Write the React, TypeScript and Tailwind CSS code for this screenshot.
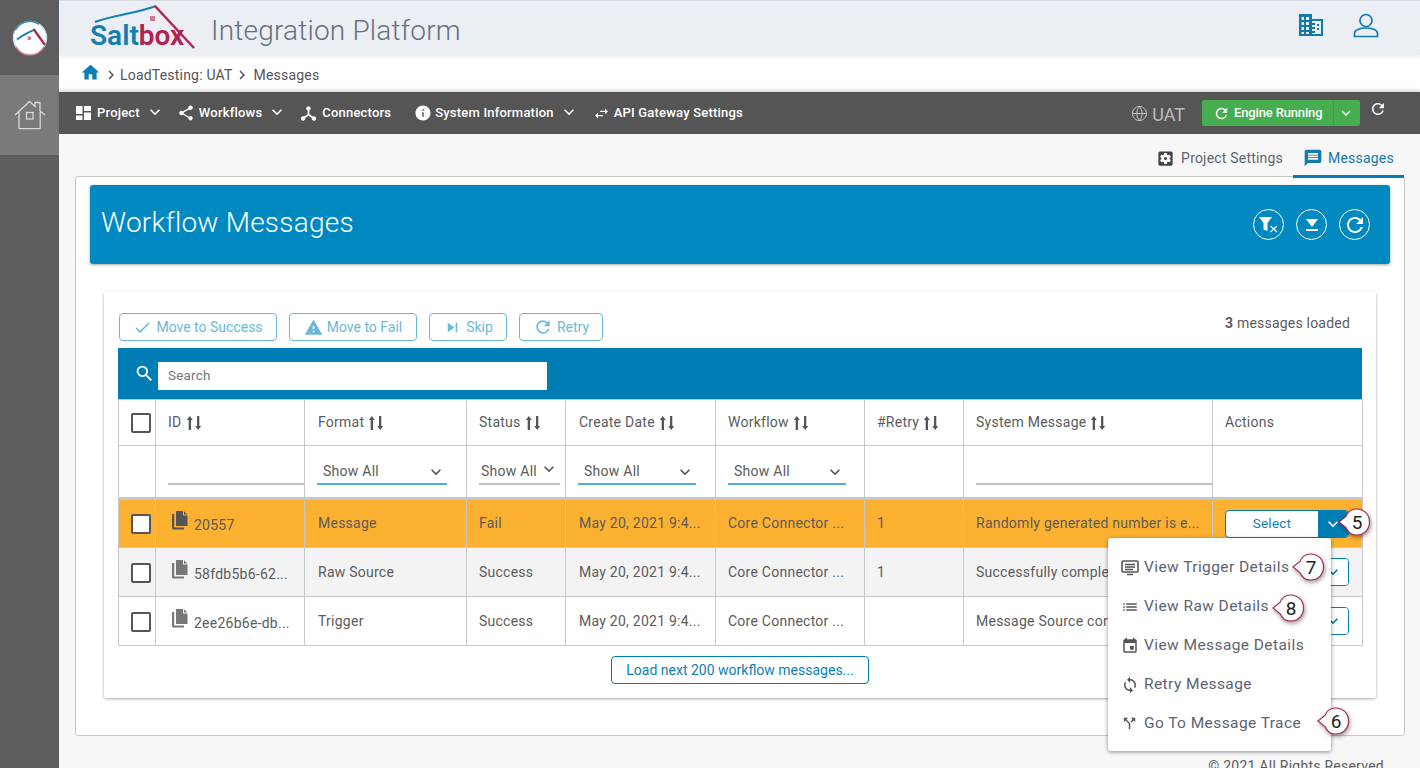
import React from "react";
import {
  MdHome, MdShare, MdInfo, MdSwapHoriz, MdRefresh, MdKeyboardArrowDown, MdSettingsApplications, MdMessage,
  MdCheck, MdWarning, MdSkipNext, MdSearch, MdList, MdEvent, MdSync, MdCallSplit, MdChevronRight, MdExpandMore,
} from "react-icons/md";
import { Globe } from "lucide-react";

const Sort = () => (
  <svg width="16" height="16" viewBox="0 0 16 16" className="shrink-0" fill="#555">
    <path d="M3.800 1 0.800 5H2.700V15H5V5H6.800Z" />
    <path d="M12.200 15 15.200 11H13.300V1H11V11H9.200Z" />
  </svg>
);

const FileIcon = ({ dark }: { dark?: boolean }) => (
  <svg width="16" height="19" viewBox="0 0 16 19" fill={dark ? "#555" : "#777"} className="shrink-0">
    <path d="M4 0H11V4.500H15.500V15H4Z" />
    <path d="M12 0.200 15.300 3.500H12Z" />
    <path d="M0 3H2.200V16.400H12V18.500H1.500C.6 18.500 0 17.900 0 17Z" />
  </svg>
);

const Check = () => <span className="block w-[20px] h-[20px] rounded-[2px] border-2 border-[#555] bg-white shrink-0" />;

const Callout = ({ n, cls }: { n: string; cls: string }) => (
  <div className={`absolute w-[33px] h-[28px] ${cls}`}>
    <svg width="33" height="28" viewBox="0 0 33 28" className="absolute inset-0 drop-shadow-[1px_2px_2px_rgba(0,0,0,0.4)]">
      <path d="M1 14 8 8.500C10 3.500 13.500 1 18.500 1 26 1 31.500 6.500 31.500 14 31.500 21.500 26 27 18.500 27 13.500 27 10 24.500 8 19.500Z" fill="#fff" stroke="#a62c56" strokeWidth="1.200" />
    </svg>
    <span className="absolute left-[5px] right-0 top-[1px] h-full flex items-center justify-center text-[19px] text-[#222] font-[family-name:'Liberation_Sans',sans-serif]">{n}</span>
  </div>
);

const NavItem = ({ icon, label, chev, cls }: { icon: React.ReactNode; label: string; chev?: boolean; cls?: string }) => (
  <div className={`flex items-center text-white text-[13px] font-medium tracking-[0.2px] ${cls ?? ""}`}>
    {icon}
    <span>{label}</span>
    {chev && <MdKeyboardArrowDown size={20} className="ml-[5px] -mt-[1px]" />}
  </div>
);

const ToolBtn = ({ icon, label, w }: { icon: React.ReactNode; label: string; w: string }) => (
  <div className={`h-[28px] ${w} flex items-center justify-center gap-[4px] rounded-[4px] border border-[#6bb9d6] text-[#6bb9d6] text-[14px] bg-white`}>
    {icon}
    <span>{label}</span>
  </div>
);

const Head = ({ label, sort = true, shift }: { label: string; sort?: boolean; shift?: boolean }) => (
  <th className={`border border-[#c8c8c8] font-normal text-left ${shift ? "pl-[13px] pr-[11px]" : "px-[12px]"}`}>
    <div className="flex items-center gap-[4px]"><span>{label}</span>{sort && <Sort />}</div>
  </th>
);

const ShowAll = ({ w, pl = "pl-[6px]", up, sel = true }: { w: string; pl?: string; up?: boolean; sel?: boolean }) => (
  <td className="border border-[#c8c8c8] border-b-[3px] border-b-[#c8c8c8] align-top pt-[14px]">
    <div className={`${w} ml-[12px] h-[25px] flex items-center justify-between ${pl} border-b-2 whitespace-nowrap ${sel ? "border-[#4eb0d8]" : "border-[#c0c0c0]"}`}>
      <span>Show All</span>
      <MdExpandMore size={20} className={`text-[#555] shrink-0 ${up ? "mb-[6px] mr-[1px]" : "mr-[1px]"}`} />
    </div>
  </td>
);

const SelectBtn = ({ open }: { open?: boolean }) => (
  <div className="flex w-[124px] h-[28px] rounded-[4px] border border-[#007db4] bg-white overflow-hidden">
    <span className="flex-1 flex items-center justify-center text-[#0c7fb3] text-[13.500px]">Select</span>
    <span className={`w-[30px] flex items-center justify-center ${open ? "bg-[#007db4] text-white" : "bg-white text-[#007db4]"}`}>
      <MdKeyboardArrowDown size={20} />
    </span>
  </div>
);

const rows = [
  { id: "20557", fmt: "Message", st: "Fail", wf: "Core Connector ...", ret: "1", msg: "Randomly generated number is e...", bg: "bg-[#fdb130]", dark: true },
  { id: "58fdb5b6-62...", fmt: "Raw Source", st: "Success", wf: "Core Connector ...", ret: "1", msg: "Successfully comple", bg: "bg-[#f3f3f3]" },
  { id: "2ee26b6e-db...", fmt: "Trigger", st: "Success", wf: "Core Connector ...", ret: "", msg: "Message Source cor", bg: "bg-white" },
];

const MenuItem = ({ icon, label }: { icon: React.ReactNode; label: string }) => (
  <div className="h-[39px] flex items-center pl-[13px] text-[15.500px] tracking-[0.42px] text-[#5c6470]">
    <span className="w-[23px] flex items-center text-[#555]">{icon}</span>
    <span>{label}</span>
  </div>
);

const Circle = ({ children }: { children: React.ReactNode }) => (
  <div className="w-[31px] h-[31px] rounded-full border border-white flex items-center justify-center text-white">{children}</div>
);

export default function App() {
  return (
    <div className="relative flex h-[768px] w-full overflow-hidden bg-[#f7f7f7] font-[family-name:Roboto,sans-serif] text-[14px] text-[#5b5b5b]">
      {/* sidebar */}
      <aside className="w-[59px] shrink-0 bg-[#5d5d5d] flex flex-col">
        <div className="h-[75px] flex items-center justify-center">
          <svg width="36" height="36" viewBox="0 0 36 36">
            <circle cx="18" cy="18" r="16.500" fill="#fff" stroke="#c7e3ee" strokeWidth="1.500" />
            <path d="M4 27A16 16 0 0 0 32 27" fill="none" stroke="#d9577f" strokeWidth="1.300" />
            <path d="M3.500 10A16.500 16.500 0 0 1 27 4" fill="none" stroke="#2f8db3" strokeWidth="1.500" />
            <path d="M5 19.500C10 15 16 13 22.500 9.500" fill="none" stroke="#1582ae" strokeWidth="1.800" />
            <path d="M21.500 9 33 25" fill="none" stroke="#b21f4c" strokeWidth="2.200" />
            <rect x="15.500" y="16.500" width="3.500" height="3.500" fill="#d67b97" />
          </svg>
        </div>
        <div className="h-[80px] bg-[#7a7a7a] flex items-center justify-center">
          <svg width="32" height="30" viewBox="0 0 32 30" fill="none" stroke="#d8d8d8" strokeWidth="1.300">
            <path d="M1 15 15.500 1.500 21 6.500V2.500H26V11L31 15" />
            <path d="M5 12V27.500C5 28.300 5.500 28.700 6.300 28.700H25C25.700 28.700 26.200 28.300 26.200 27.500V12" />
            <rect x="12.500" y="12.500" width="6.500" height="6.500" />
          </svg>
        </div>
      </aside>

      <main className="flex-1 min-w-0 flex flex-col">
        {/* header */}
        <header className="relative h-[55px] shrink-0 bg-[#ebeef3] border-t border-[#d6dbe1] flex items-center shadow-[0_2px_4px_rgba(0,0,0,0.08)]">
          <div className="relative ml-[31px] w-[104px] h-[50px]">
            <svg width="106" height="48" viewBox="0 0 106 48" className="absolute left-0 top-0" fill="none">
              <path d="M5 19C24 12 44 11 66 3" stroke="#1582ae" strokeWidth="2" />
              <path d="M65 3 104 45" stroke="#b5234f" strokeWidth="2.500" />
              <rect x="60" y="13" width="5" height="5" fill="#cf7b95" />
            </svg>
            <span className="absolute left-0 top-[15px] text-[28px] leading-[36px] font-semibold font-[family-name:'Open_Sans',sans-serif] whitespace-nowrap">
              <span className="text-[#137fb0]">Salt</span><span className="text-[#b3214e]">box</span>
            </span>
          </div>
          <span className="ml-[17px] mt-[5px] text-[28px] font-light tracking-[0.2px] text-[#687080]">Integration Platform</span>
          <div className="ml-auto mr-[41px] -mt-[6px] flex items-center gap-[30px] text-[#1479ad]">
            <svg width="24" height="22" viewBox="0 0 24 22" fill="currentColor">
              <path fillRule="evenodd" d="M0 0H13V5H24V22H0ZM2.500 3V6H5V3ZM7 3V6H10V3ZM2.500 8V11H5V8ZM7 8V11H10V8ZM2.500 13V16H5V13ZM7 13V16H10V13ZM2.500 18V20H5V18ZM7 18V20H10V18ZM13 7V9H16V11H13V13H16V15H13V17H16V19H13V20H22V7ZM18 10H20V12H18ZM18 14H20V16H18Z" />
            </svg>
            <svg width="26" height="25" viewBox="0 0 26 25" fill="none" stroke="currentColor" strokeWidth="1.700">
              <circle cx="13" cy="7.500" r="6" />
              <path d="M1.500 20.500C1.500 16.500 8 15 13 15S24.500 16.500 24.500 20.500V23.500H1.500Z" />
            </svg>
          </div>
        </header>

        {/* breadcrumb */}
        <div className="h-[37px] shrink-0 bg-white flex items-center pl-[21px] text-[14px] tracking-[0.2px] text-[#555]">
          <MdHome size={21} className="text-[#0b7fb5] -mt-[3px]" />
          <MdChevronRight size={18} className="ml-[1px] mt-[3px]" />
          <span className="mt-[3px]">LoadTesting: UAT</span>
          <MdChevronRight size={18} className="mt-[3px]" />
          <span className="ml-[3px] mt-[3px]">Messages</span>
        </div>

        {/* nav */}
        <nav className="h-[42px] shrink-0 bg-[#555] flex items-center pl-[17px] shadow-[0_-2px_3px_rgba(0,0,0,0.15)]">
          <NavItem cls="-mt-[1px]" chev label="Project" icon={
            <svg width="15" height="14" viewBox="0 0 15 14" fill="#fff" className="mr-[6px]"><rect width="6.500" height="8" /><rect x="8" width="7" height="5" /><rect y="9.500" width="6.500" height="4.500" /><rect x="8" y="6.500" width="7" height="7.500" /></svg>
          } />
          <NavItem cls="ml-[12px] -mt-[1px]" chev label="Workflows" icon={<MdShare size={18} className="mr-[4px]" />} />
          <NavItem cls="ml-[14px]" label="Connectors" icon={
            <svg width="15" height="15" viewBox="0 0 15 15" fill="#fff" stroke="#fff" className="mr-[6px]"><circle cx="7.500" cy="2.500" r="1.800" /><circle cx="2" cy="12.500" r="1.800" /><circle cx="13" cy="12.500" r="1.800" /><path d="M7.500 3V8.500L2 12.500M7.500 8.500 13 12.500" strokeWidth="1.700" fill="none" /></svg>
          } />
          <NavItem cls="ml-[23px] -mt-[1px]" chev label="System Information" icon={<MdInfo size={18} className="mr-[3px]" />} />
          <NavItem cls="ml-[14px]" label="API Gateway Settings" icon={<MdSwapHoriz size={17} className="mr-[4px]" />} />
          <div className="ml-auto flex items-center">
            <Globe size={17} strokeWidth={1.400} className="text-[#c4c4c4] mt-[1px]" />
            <span className="ml-[4px] mt-[2px] text-[18px] text-[#bbb]">UAT</span>
            <div className="ml-[17px] w-[158px] h-[26px] rounded-[2px] bg-[#46ae4f] flex text-white text-[13px] font-medium">
              <div className="flex-1 flex items-center pl-[11px] border-r border-[#3f9c47]">
                <MdRefresh size={17} className="mr-[4px]" />
                <span className="tracking-[-0.15px]">Engine Running</span>
              </div>
              <div className="w-[26px] flex items-center justify-center pr-[2px]"><MdKeyboardArrowDown size={18} /></div>
            </div>
            <MdRefresh size={18} className="text-white ml-[9px] mr-[33px] -mt-[8px]" />
          </div>
        </nav>

        {/* content tabs */}
        <div className="h-[42px] shrink-0 flex items-end justify-end pr-[16px] relative z-10">
          <div className="flex items-center gap-[6px] h-[44px] -mb-[2px] pt-[4px] pr-[10px] text-[14px] tracking-[0.2px] text-[#5c6470]">
            <MdSettingsApplications size={19} className="text-[#444]" />
            <span>Project Settings</span>
          </div>
          <div className="flex items-center justify-center gap-[5px] w-[111px] h-[44px] -mb-[2px] pt-[7px] border-b-[3px] border-[#007db4] text-[14px] tracking-[0.2px] text-[#1479ad]">
            <MdMessage size={20} />
            <span>Messages</span>
          </div>
        </div>

        {/* outer card */}
        <section className="ml-[16px] mr-[15px] h-[560px] shrink-0 bg-white border border-[#c6c6c6] rounded-[3px] px-[14px] pt-[8px]">
          <div className="h-[79px] bg-[#0089c1] rounded-[3px] shadow-[0_1px_3px_rgba(0,0,0,0.35)] flex items-center pl-[11px] pr-[20px] text-white">
            <h1 className="text-[28px] font-light tracking-[0.22px] -mt-[4px]">Workflow Messages</h1>
            <div className="ml-auto flex items-center gap-[12px]">
              <Circle>
                <svg width="22" height="17" viewBox="0 0 22 17" fill="#fff">
                  <path d="M1 1H14L9.500 7V15L5.500 13.500V7Z" />
                  <path d="M12.500 10 19 16M19 10 12.500 16" stroke="#fff" strokeWidth="1.100" />
                </svg>
              </Circle>
              <Circle>
                <svg width="16" height="16" viewBox="0 0 16 16" fill="#fff"><path d="M2 2H14L8 10Z" /><rect x="2" y="12" width="12" height="2" /></svg>
              </Circle>
              <Circle><MdRefresh size={24} /></Circle>
            </div>
          </div>

          {/* inner panel */}
          <div className="mt-[28px] mx-[14px] h-[406px] bg-white rounded-[2px] shadow-[0_1px_3px_rgba(0,0,0,0.35)] px-[14px] pt-[21px]">
            <div className="flex items-start pl-px h-[28px] gap-[12px]">
              <ToolBtn w="w-[158px]" icon={<MdCheck size={19} className="text-[#6bb9d6]" />} label="Move to Success" />
              <ToolBtn w="w-[128px]" icon={<MdWarning size={19} />} label="Move to Fail" />
              <ToolBtn w="w-[78px]" icon={<MdSkipNext size={19} />} label="Skip" />
              <ToolBtn w="w-[84px]" icon={<MdRefresh size={20} />} label="Retry" />
              <div className="ml-auto mr-[12px] text-[14px] tracking-[0.2px]"><b className="font-bold">3</b> messages loaded</div>
            </div>
            <div className="mt-[7px] h-[51px] bg-[#007db4] flex items-center pl-[16px]">
              <MdSearch size={21} className="text-white" />
              <div className="ml-[3px] mt-[4px] w-[389px] h-[28px] bg-white flex items-center pl-[10px] text-[13.500px] text-[#777] tracking-[0.2px]">Search</div>
            </div>
            <table className="table-fixed w-[1244px] border-collapse tracking-[0.25px]">
              <colgroup>
                <col className="w-[37px]" /><col className="w-[149px]" /><col className="w-[162px]" /><col className="w-[99px]" /><col className="w-[150px]" /><col className="w-[149px]" /><col className="w-[99px]" /><col className="w-[249px]" /><col className="w-[150px]" />
              </colgroup>
              <thead>
                <tr className="h-[46px]">
                  <th className="border border-[#c8c8c8]"><div className="flex justify-center pl-[8px] mt-[1px]"><Check /></div></th>
                  <Head label="ID" /><Head label="Format" shift /><Head label="Status" /><Head label="Create Date" shift /><Head label="Workflow" /><Head label="#Retry" /><Head label="System Message" /><Head label="Actions" sort={false} />
                </tr>
                <tr className="h-[53px]">
                  <td className="border border-[#c8c8c8] border-b-[3px]" />
                  <td className="border border-[#c8c8c8] border-b-[3px] align-top pt-[14px]"><div className="ml-[12px] h-[25px] border-b-2 border-[#c0c0c0]" /></td>
                  <ShowAll w="w-[130px]" />
                  <ShowAll w="w-[81px]" pl="pl-[2px]" sel={false} up />
                  <ShowAll w="w-[118px]" />
                  <ShowAll w="w-[118px]" />
                  <td className="border border-[#c8c8c8] border-b-[3px]" />
                  <td className="border border-[#c8c8c8] border-b-[3px] align-top pt-[14px]"><div className="ml-[12px] h-[25px] border-b-2 border-[#c0c0c0]" /></td>
                  <td className="border border-[#c8c8c8] border-b-[3px]" />
                </tr>
              </thead>
              <tbody>
                {rows.map((r, i) => (
                  <tr key={r.id} className={`h-[49px] ${r.bg}`}>
                    <td className="border border-[#c8c8c8]"><div className="flex justify-center pl-[8px] mt-[1px]"><Check /></div></td>
                    <td className="border border-[#c8c8c8] pl-[16px]">
                      <div className="flex items-start">
                        <FileIcon dark={r.dark} />
                        <span className="ml-[6px] mt-[4px] whitespace-nowrap">{r.id}</span>
                      </div>
                    </td>
                    <td className="border border-[#c8c8c8] px-[13px]">{r.fmt}</td>
                    <td className="border border-[#c8c8c8] px-[12px]">{r.st}</td>
                    <td className="border border-[#c8c8c8] px-[13px] whitespace-nowrap">May 20, 2021 9:4...</td>
                    <td className="border border-[#c8c8c8] px-[12px] whitespace-nowrap">{r.wf}</td>
                    <td className="border border-[#c8c8c8] px-[12px]">{r.ret}</td>
                    <td className="border border-[#c8c8c8] px-[12px] whitespace-nowrap">{r.msg}</td>
                    <td className="border border-[#c8c8c8] pl-[12px]"><SelectBtn open={i === 0} /></td>
                  </tr>
                ))}
              </tbody>
            </table>
            <div className="mt-[10px] flex justify-center">
              <div className="w-[258px] h-[28px] rounded-[4px] border border-[#007db4] flex items-center justify-center text-[#0c7fb3] text-[14px]">Load next 200 workflow messages...</div>
            </div>
          </div>
        </section>

        <footer className="pr-[36px] pt-[20px] text-right text-[14px] tracking-[0.25px] text-[#5c5c5c]">© 2021 All Rights Reserved</footer>
      </main>

      {/* dropdown menu */}
      <div className="absolute left-[1108px] top-[538px] w-[223px] h-[213px] bg-white rounded-[3px] shadow-[0_1px_4px_rgba(0,0,0,0.45)] pt-[10px]">
        <MenuItem label="View Trigger Details" icon={
          <svg width="18" height="16" viewBox="0 0 18 16" fill="none" stroke="#555" strokeWidth="1.600"><rect x="1" y="1" width="16" height="11" rx="1" /><path d="M4 4.500H14M4 7H14M4 9.500H12M6 14.500H12" /></svg>
        } />
        <MenuItem label="View Raw Details" icon={<MdList size={18} />} />
        <MenuItem label="View Message Details" icon={<MdEvent size={18} />} />
        <MenuItem label="Retry Message" icon={<MdSync size={18} />} />
        <MenuItem label="Go To Message Trace" icon={<MdCallSplit size={17} />} />
      </div>

      <Callout n="5" cls="left-[1338px] top-[508px]" />
      <Callout n="7" cls="left-[1292px] top-[553px]" />
      <Callout n="8" cls="left-[1272px] top-[594px]" />
      <Callout n="6" cls="left-[1317px] top-[707px]" />
    </div>
  );
}
